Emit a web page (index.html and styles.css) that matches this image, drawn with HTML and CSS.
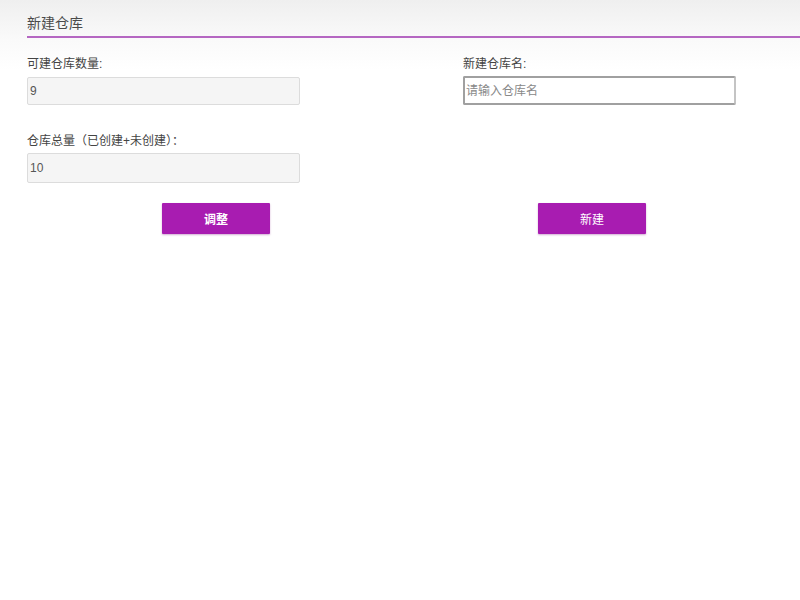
FILE: index.html
```html
<!DOCTYPE html>
<html lang="zh-CN">
<head>
<meta charset="utf-8">
<title>新建仓库</title>
<link rel="stylesheet" href="styles.css">
</head>
<body>
<div class="page">
  <div class="header">
    <h1 class="title">新建仓库</h1>
  </div>
  <div class="grid">
    <div class="col col-left">
      <div class="field">
        <label class="label">可建仓库数量:</label>
        <input class="input input-ro" type="text" value="9" readonly>
      </div>
      <div class="field field-second">
        <label class="label label-tight">仓库总量（已创建+未创建）：</label>
        <input class="input input-ro input-tall" type="text" value="10" readonly>
      </div>
      <div class="btn-row">
        <button class="btn">调整</button>
      </div>
    </div>
    <div class="col col-right">
      <div class="field field-right">
        <label class="label label-right">新建仓库名:</label>
        <input class="input input-focus" type="text" placeholder="请输入仓库名">
      </div>
      <div class="btn-row btn-row-right">
        <button class="btn btn-light">新建</button>
      </div>
    </div>
  </div>
</div>
</body>
</html>
```
FILE: styles.css
```css
* { box-sizing: border-box; }
html, body { margin: 0; padding: 0; background: #fff; }
body {
  font-family: "Liberation Sans", "Noto Sans CJK SC", sans-serif;
  color: #444;
  width: 800px;
  height: 600px;
  background: linear-gradient(#efefef 0, #fafafa 40px, #fff 70px, #fff 100%);
}
.page { padding-top: 13px; }
.header {
  margin-left: 27px;
  border-bottom: 2px solid #b567c2;
  height: 25px;
}
.title {
  margin: 0;
  font-size: 14px;
  font-weight: normal;
  line-height: 20px;
  color: #4a4a4a;
}
.grid {
  display: grid;
  grid-template-columns: 378px 374px;
  padding-left: 27px;
  padding-top: 18px;
}
.field {
  display: flex;
  flex-direction: column;
  width: 273px;
}
.field-second { margin-top: 28px; }
.field-right { margin-left: 58px; }
.label {
  font-size: 12px;
  line-height: 16px;
  color: #444;
  margin-bottom: 5px;
}
.label-tight { margin-bottom: 4px; }
.label-right { margin-bottom: 4px; }
.input {
  width: 273px;
  height: 28px;
  font-family: "Liberation Sans", "Noto Sans CJK SC", sans-serif;
  font-size: 12px;
  padding: 0 2px;
  color: #555;
  outline: none;
}
.input-tall { height: 30px; }
.input-ro {
  background: #f5f5f5;
  border: 1px solid #dcdcdc;
  border-radius: 2px;
}
.input-focus {
  height: 29px;
  background: #fff;
  border: 2px solid #a0a0a0;
  border-right-color: #c4c4c4;
  border-radius: 2px;
  padding: 0 1px;
}
.input-focus::placeholder { color: #888; }
.btn-row {
  display: flex;
  justify-content: center;
  margin-top: 20px;
}
.btn-row-right { margin-top: 98px; }
.btn {
  width: 108px;
  height: 31px;
  background: #a81cb1;
  color: #fff;
  border: none;
  border-radius: 1px;
  font-family: "Liberation Sans", "Noto Sans CJK SC", sans-serif;
  font-size: 12px;
  font-weight: bold;
  box-shadow: 0 1px 2px rgba(120, 20, 130, 0.35);
}
.btn-light { font-weight: normal; }
```
